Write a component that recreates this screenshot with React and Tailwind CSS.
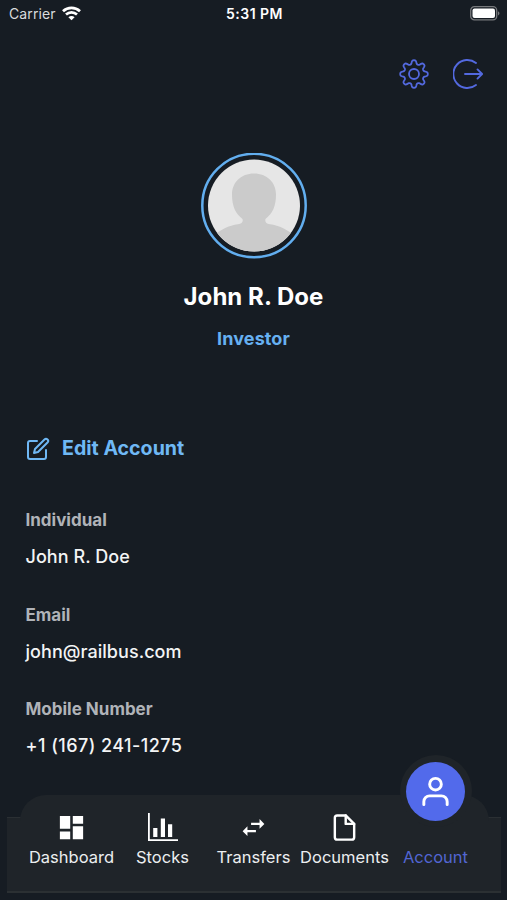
import { FiEdit, FiFile, FiUser } from "react-icons/fi";
import { MdDashboard, MdSwapHoriz } from "react-icons/md";

const details = [
  { label: "Individual", value: "John R. Doe", spacing: "tracking-[0.05px]" },
  { label: "Email", value: "john@railbus.com", spacing: "tracking-[0.05px]" },
  { label: "Mobile Number", value: "+1 (167) 241-1275", spacing: "tracking-[0.45px]" },
];

// Outline of a gear with eight rounded teeth
const gearPoints = Array.from({ length: 160 }, (_, i) => {
  const a = (i / 160) * Math.PI * 2;
  const wave = Math.cos(8 * a);
  const r = 11.9 + 2 * Math.tanh(1.7 * wave);
  return `${(15 + r * Math.cos(a)).toFixed(2)},${(15 + r * Math.sin(a)).toFixed(2)}`;
}).join(" ");

function GearIcon() {
  return (
    <svg width="30" height="30" viewBox="0 0 30 30" fill="none" stroke="currentColor" strokeWidth="1.8">
      <polygon points={gearPoints} strokeLinejoin="round" />
      <circle cx="15" cy="15" r="5" />
    </svg>
  );
}

function LogoutIcon() {
  return (
    <svg
      width="31"
      height="30"
      viewBox="0 0 31 30"
      fill="none"
      stroke="currentColor"
      strokeWidth="1.9"
      strokeLinecap="round"
      strokeLinejoin="round"
    >
      <path d="M23 4A14 14 0 1 0 23 26" />
      <path d="M12 15H29M24.500 10.400l4.600 4.600-4.600 4.600" />
    </svg>
  );
}

function StocksIcon() {
  return (
    <svg width="30" height="30" viewBox="0 0 30 30" fill="currentColor">
      <path d="M0 1h1.8v26.2H30V29H0z" />
      <path d="M5.2 16h4.2v9H5.2zM12.8 6.500h4.2V25h-4.2zM20 12.2h4.2V25H20z" />
    </svg>
  );
}

const tabs = [
  { name: "Dashboard", icon: <MdDashboard size={31} /> },
  { name: "Stocks", icon: <StocksIcon /> },
  { name: "Transfers", icon: <MdSwapHoriz size={29} /> },
  { name: "Documents", icon: <FiFile size={29} /> },
];

function StatusBar() {
  return (
    <div className="grid h-[27px] grid-cols-3 items-center pl-[9px] pr-[7px] text-[14px]">
      <div className="flex items-center gap-[6px] text-[#d9dbdd]">
        <span className="tracking-[0.1px]">Carrier</span>
        <svg width="19" height="15" viewBox="0 0 19 15" fill="none" stroke="#fff" strokeWidth="2.7">
          <path d="M1 5.3C5.8.8 13.2.8 18 5.3" />
          <path d="M4 8.6c3.2-2.9 7.8-2.9 11 0" />
          <path d="M6.4 11.2c1.8-1.6 4.4-1.6 6.2 0L9.5 14.3z" fill="#fff" stroke="none" />
        </svg>
      </div>
      <span className="text-center font-semibold tracking-[0.5px] text-white">5:31 PM</span>
      <svg className="justify-self-end" width="30" height="15" viewBox="0 0 30 15">
        <rect x=".7" y=".7" width="26" height="13.2" rx="3.7" fill="none" stroke="#77797c" strokeWidth="1.3" />
        <rect x="2.5" y="2.5" width="22.5" height="9.6" rx="2" fill="#fff" />
        <path d="M28 5.2c2 .8 2 3.4 0 4.2z" fill="#77797c" />
      </svg>
    </div>
  );
}

function Avatar() {
  return (
    <svg width="106" height="106" viewBox="0 0 106 106">
      <clipPath id="avatar">
        <circle cx="53" cy="52.500" r="46" />
      </clipPath>
      <circle cx="53" cy="52.500" r="51.700" fill="none" stroke="#62aeef" strokeWidth="2.500" />
      <g clipPath="url(#avatar)">
        <rect width="106" height="106" fill="#e6e6e6" />
        <path
          d="M53 20.500c13 0 22 9 22 21 0 12-3.500 19-10.500 24.500-.8 3 .5 4.500 4.500 5.200C78 72.500 87 76.500 94 83.500v22H12v-22c7-7 16-11 25-12.300 4-.7 5.300-2.200 4.500-5.200C34.500 60.500 31 53.500 31 41.500c0-12 9-21 22-21z"
          fill="#cbcbcb"
        />
      </g>
    </svg>
  );
}

function TabBar() {
  return (
    <nav className="relative h-[105px] text-[16.5px] text-[#eceef0]">
      {/* Layered backgrounds: base strip, raised panel and halo of the active tab */}
      <div className="absolute inset-x-[6.5px] top-[22px] h-[76px] border-b-2 border-t border-b-[#2b3033] border-t-[#2a2f33] bg-[#1f2429]" />
      <div className="absolute left-5 right-[18px] top-0 h-[60px] rounded-t-[26px] bg-[#1f2429]" />
      <div className="absolute -top-[40px] left-[400px] size-[72px] rounded-full bg-[#1f2429]" />
      <div className="relative grid grid-cols-5 px-[26px] pt-[16px]">
        {tabs.map((tab) => (
          <div key={tab.name} className="flex flex-col items-center">
            <div className="flex h-8 items-center text-white">{tab.icon}</div>
            <span className="mt-[2px] leading-6">{tab.name}</span>
          </div>
        ))}
        <div className="flex flex-col items-center text-[#5266d3]">
          <div className="-mt-[49px] flex size-[59px] items-center justify-center rounded-full bg-[#526aeb] text-white">
            <FiUser size={35} />
          </div>
          <span className="mt-[24px] leading-6">Account</span>
        </div>
      </div>
    </nav>
  );
}

export default function App() {
  return (
    <div className="flex h-[900px] w-[507px] flex-col overflow-hidden bg-[#161c23] font-[Inter,sans-serif] text-white">
      <StatusBar />
      <div className="mt-8 flex justify-end gap-[24px] pr-[23px] text-[#5369df]">
        <GearIcon />
        <LogoutIcon />
      </div>

      <div className="mt-[64px] flex flex-col items-center">
        <Avatar />
        <h1 className="mt-[22px] text-[24px] font-bold leading-8 tracking-[0.05px]">John R. Doe</h1>
        <p className="mt-[14px] text-[18px] font-bold leading-6 tracking-[0.1px] text-[#66b0f1]">Investor</p>
      </div>

      <main className="mt-[84px] flex-1 pl-[25.5px]">
        <div className="flex h-7 items-center gap-[12.5px] text-[#6fb8f5]">
          <FiEdit size={24} />
          <span className="text-[19.6px] font-bold">Edit Account</span>
        </div>
        <dl className="mt-[45px] flex flex-col gap-[33.5px]">
          {details.map((item) => (
            <div key={item.label}>
              <dt className="text-[17px] font-bold leading-6 text-[#b0b3b8]">{item.label}</dt>
              <dd className={`mt-[13px] text-[18px] font-medium leading-6 text-[#f3f4f5] ${item.spacing}`}>
                {item.value}
              </dd>
            </div>
          ))}
        </dl>
      </main>

      <TabBar />
    </div>
  );
}
